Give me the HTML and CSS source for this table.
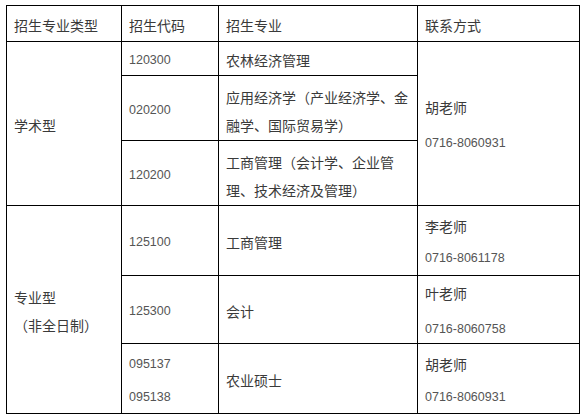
FILE: index.html
```html
<!DOCTYPE html>
<html lang="zh-CN">
<head>
<meta charset="utf-8">
<title>招生专业</title>
<link rel="stylesheet" href="styles.css">
</head>
<body>
<table class="majors">
  <colgroup>
    <col class="c-type">
    <col class="c-code">
    <col class="c-major">
    <col class="c-contact">
  </colgroup>
  <tr class="r-head">
    <td>招生专业类型</td>
    <td>招生代码</td>
    <td>招生专业</td>
    <td>联系方式</td>
  </tr>
  <tr class="r-1">
    <td rowspan="3">学术型</td>
    <td class="num">120300</td>
    <td>农林经济管理</td>
    <td rowspan="3"><div class="contact c-wide"><span>胡老师</span><span class="num">0716-8060931</span></div></td>
  </tr>
  <tr class="r-2">
    <td class="num">020200</td>
    <td class="wrap">应用经济学（产业经济学、金融学、国际贸易学）</td>
  </tr>
  <tr class="r-3">
    <td class="num">120200</td>
    <td class="wrap">工商管理（会计学、企业管理、技术经济及管理）</td>
  </tr>
  <tr class="r-4">
    <td rowspan="3"><div class="lines"><span>专业型</span><span>（非全日制）</span></div></td>
    <td class="num">125100</td>
    <td>工商管理</td>
    <td><div class="contact c-narrow"><span>李老师</span><span class="num">0716-8061178</span></div></td>
  </tr>
  <tr class="r-5">
    <td class="num">125300</td>
    <td>会计</td>
    <td><div class="contact c-wide"><span>叶老师</span><span class="num">0716-8060758</span></div></td>
  </tr>
  <tr class="r-6">
    <td><div class="contact"><span class="num">095137</span><span class="num">095138</span></div></td>
    <td>农业硕士</td>
    <td><div class="contact"><span>胡老师</span><span class="num">0716-8060931</span></div></td>
  </tr>
</table>
</body>
</html>
```
FILE: styles.css
```css
html, body {
  margin: 0;
  padding: 0;
  background: #ffffff;
}

body {
  padding: 5px 0 0 6px;
  font-family: "Noto Sans CJK SC", "Liberation Sans", sans-serif;
  font-size: 14px;
  color: #3a3a3a;
}

.majors {
  border-collapse: collapse;
  table-layout: fixed;
  width: 573px;
}

.c-type { width: 115px; }
.c-code { width: 97px; }
.c-major { width: 199px; }
.c-contact { width: 162px; }

.majors td {
  border: 1px solid #000000;
  padding: 3px 6px 0 7px;
  vertical-align: middle;
  line-height: 20px;
  text-align: left;
}

.r-head { height: 36px; }
.r-1 { height: 34px; }
.r-2 { height: 65px; }
.r-3 { height: 65px; }
.r-4 { height: 70px; }
.r-5 { height: 68px; }
.r-6 { height: 70px; }

.num {
  font-family: "Liberation Sans", sans-serif;
  font-size: 12.5px;
  color: #555555;
}

.majors td.wrap {
  line-height: 28px;
  padding-top: 5px;
}

.lines {
  display: flex;
  flex-direction: column;
  gap: 8px;
}

.contact {
  display: flex;
  flex-direction: column;
  gap: 13px;
}

.contact.c-wide { gap: 16px; }
.contact.c-narrow { gap: 12px; }
```
